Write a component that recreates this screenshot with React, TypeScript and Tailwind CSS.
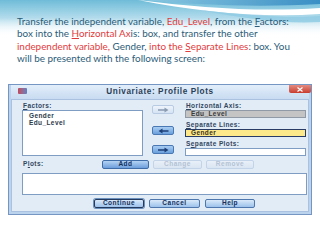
import React from 'react';

const teal = 'text-[#2b5c78]';
const red = 'text-[#e23b3b]';

function Wave() {
  return (
    <svg className="absolute left-0 top-0" width="320" height="36" viewBox="0 0 320 36">
      <defs>
        <linearGradient id="sky" x1="0" y1="0" x2="0" y2="1">
          <stop offset="0" stopColor="#6fbcd8" />
          <stop offset="0.5" stopColor="#b3dcec" />
          <stop offset="1" stopColor="#ffffff" stopOpacity="0" />
        </linearGradient>
        <linearGradient id="deep" x1="0" y1="0" x2="1" y2="0">
          <stop offset="0" stopColor="#8cc9e2" />
          <stop offset="1" stopColor="#3a8fc4" />
        </linearGradient>
      </defs>
      <rect x="0" y="0" width="320" height="36" fill="url(#sky)" />
      <path d="M140 0 C190 4 250 8 320 4 L320 0 Z" fill="url(#deep)" />
      <path d="M138 0 C200 8 260 12 320 8 L320 14 C260 18 200 12 138 0 Z" fill="#ffffff" />
      <path d="M200 10 C250 16 290 18 320 16 L320 22 C290 24 250 20 200 10 Z" fill="#8fcbe3" opacity="0.8" />
    </svg>
  );
}

function Arrow({ dir, active }: { dir: 'left' | 'right'; active: boolean }) {
  const c = active ? '#1d3f78' : '#8a9bb2';
  return (
    <div
      className={`h-[9px] w-[22px] rounded-[2px] border flex items-center justify-center ${
        active
          ? 'border-[#4a78b4] bg-gradient-to-b from-[#a9cdf2] to-[#6a9fdc]'
          : 'border-[#b8cbe2] bg-gradient-to-b from-[#eef4fb] to-[#d5e3f3]'
      }`}
    >
      <svg width="11" height="6" viewBox="0 0 11 6">
        {dir === 'right' ? (
          <path d="M0 2.2 H6.5 V0.5 L10.5 3 L6.5 5.5 V3.8 H0 Z" fill={c} />
        ) : (
          <path d="M10.5 2.2 H4.5 V0.5 L0.5 3 L4.5 5.5 V3.8 H10.5 Z" fill={c} />
        )}
      </svg>
    </div>
  );
}

function Btn({ label, kind, w }: { label: string; kind: 'blue' | 'off' | 'plain' | 'default'; w: string }) {
  const styles = {
    blue: 'border-[#3f6da8] bg-gradient-to-b from-[#b3d3f3] to-[#6c9edb] text-[#14305c]',
    off: 'border-[#c3d4e8] bg-gradient-to-b from-[#e9f0f8] to-[#d9e5f2] text-[#b3c2d4]',
    plain: 'border-[#4d77ad] bg-gradient-to-b from-[#d9e9f9] to-[#9cc1ea] text-[#14305c]',
    default: 'border-[#233a5e] ring-1 ring-[#6b8fbd] bg-gradient-to-b from-[#d9e9f9] to-[#9cc1ea] text-[#14305c]',
  }[kind];
  return (
    <div
      className={`h-[9px] ${w} rounded-[2px] border flex items-center justify-center text-[6.5px] font-bold tracking-[0.5px] leading-none ${styles}`}
    >
      {label}
    </div>
  );
}

function Label({ children }: { children: React.ReactNode }) {
  return (
    <div className="h-[7px] flex items-center pl-[1px] text-[6.5px] font-bold tracking-[0.4px] leading-none text-[#33475f]">
      {children}
    </div>
  );
}

export default function App() {
  return (
    <div
      className="relative w-[320px] h-[240px] overflow-hidden bg-white"
      style={{ fontFamily: '"Liberation Sans", Arial, sans-serif' }}
    >
      <Wave />
      <div
        className="relative pt-[15px] pl-[17px] text-[9.9px] leading-[12.3px] whitespace-nowrap"
        style={{ fontFamily: 'Lato, "Open Sans", sans-serif' }}
      >
        <span className={teal}>Transfer the independent variable, </span>
        <span className={red}>Edu_Level</span>
        <span className={teal}>
          , from the <span className="underline">F</span>actors:
        </span>
        <br />
        <span className={teal}>box into the </span>
        <span className={red}>
          <span className="underline">H</span>orizontal Ax
        </span>
        <span className={teal}>is: box, and transfer the other</span>
        <br />
        <span className={red}>independent variable,</span>
        <span className={teal}> Gender, </span>
        <span className={red}>
          into the <span className="underline">S</span>eparate Lines
        </span>
        <span className={teal}>: box. You</span>
        <br />
        <span className={teal}>will be presented with the following screen:</span>
      </div>

      <div className="relative mt-[20px] mx-[8px] w-[304px] border border-[#7596c2] bg-[#bcd3ee] p-[2px] pt-0">
        {/* title bar */}
        <div className="relative h-[14px] flex items-center justify-center bg-gradient-to-b from-[#e3eefa] to-[#c8dbf1]">
          <div className="absolute left-[7px] top-[3px] w-[9px] h-[6px] rounded-[1px] bg-gradient-to-r from-[#c2455a] to-[#5b7fc4]" />
          <span className="text-[8.2px] font-bold tracking-[0.6px] text-[#2b3e57]">Univariate: Profile Plots</span>
          <div className="absolute right-[-2px] top-0 w-[22px] h-[8px] rounded-b-[2px] bg-gradient-to-b from-[#e48a80] to-[#c73a2e] flex items-center justify-center">
            <svg width="6" height="5" viewBox="0 0 6 5">
              <path d="M0.5 0.5 L5.5 4.5 M5.5 0.5 L0.5 4.5" stroke="#ffffff" strokeWidth="1.2" />
            </svg>
          </div>
        </div>

        {/* client */}
        <div className="bg-[#e2ecf7] border border-[#aac2df] pl-[10px] pr-[2px] pt-[3px] pb-[3px]">
          <div className="flex">
            <div className="w-[121px]">
              <Label>
                <span className="underline">F</span>actors:
              </Label>
              <div className="h-[46px] bg-white border border-[#7f9cc2] pl-[6px] pt-[1px] text-[6.5px] font-bold tracking-[0.4px] leading-[7px] text-[#2d3a4b]">
                <div>Gender</div>
                <div>Edu_Level</div>
              </div>
            </div>
            <div className="ml-[9px] w-[22px] flex flex-col">
              <div className="mt-[2px]">
                <Arrow dir="right" active={false} />
              </div>
              <div className="mt-[12px]">
                <Arrow dir="left" active />
              </div>
              <div className="mt-[10px]">
                <Arrow dir="right" active />
              </div>
            </div>
            <div className="ml-[11px] w-[121px] flex flex-col">
              <Label>
                <span className="underline">H</span>orizontal Axis:
              </Label>
              <div className="h-[8px] bg-[#c4c4c4] border border-[#8f9aa6] pl-[5px] flex items-center text-[6.5px] font-bold tracking-[0.4px] leading-none text-[#3a3a3a]">
                Edu_Level
              </div>
              <div className="mt-[4px]">
                <Label>
                  <span className="underline">S</span>eparate Lines:
                </Label>
              </div>
              <div className="h-[8px] bg-[#fde88a] border border-[#283c66] pl-[5px] flex items-center text-[6.5px] font-bold tracking-[0.4px] leading-none text-[#3a3320]">
                Gender
              </div>
              <div className="mt-[4px]">
                <Label>
                  S<span className="underline">e</span>parate Plots:
                </Label>
              </div>
              <div className="h-[8px] bg-white border border-[#7f9cc2]" />
            </div>
          </div>

          <div className="mt-[4px] flex items-center">
            <div className="w-[80px]">
              <Label>
                P<span className="underline">l</span>ots:
              </Label>
            </div>
            <div className="flex gap-[4px]">
              <Btn label="Add" kind="blue" w="w-[47px]" />
              <Btn label="Change" kind="off" w="w-[49px]" />
              <Btn label="Remove" kind="off" w="w-[48px]" />
            </div>
          </div>

          <div className="mt-[4px] w-[285px] h-[22px] bg-white border border-[#7f9cc2]" />

          <div className="mt-[4px] ml-[72px] flex gap-[5px]">
            <Btn label="Continue" kind="default" w="w-[50px]" />
            <Btn label="Cancel" kind="plain" w="w-[51px]" />
            <Btn label="Help" kind="plain" w="w-[50px]" />
          </div>
        </div>
      </div>
    </div>
  );
}
